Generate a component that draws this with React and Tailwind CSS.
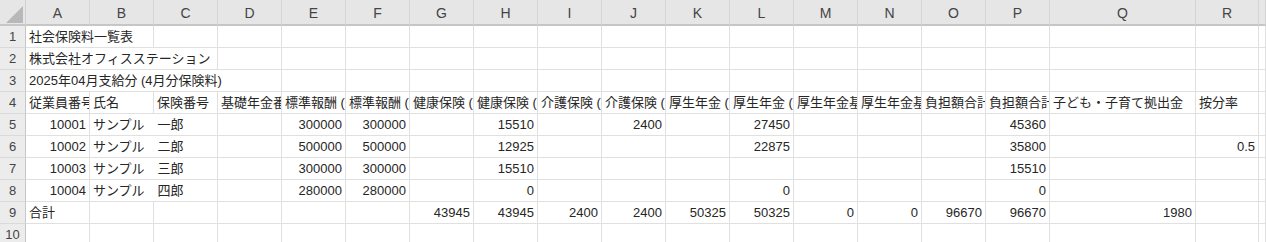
import React from "react";

const COLS = ["A","B","C","D","E","F","G","H","I","J","K","L","M","N","O","P","Q","R",""];

// each row: array of [colIndex(0=A), text, span, align]
const rows = [
  [[0, "社会保険料一覧表", 2, "l"]],
  [[0, "株式会社オフィスステーション", 3, "l"]],
  [[0, "2025年04月支給分 (4月分保険料)", 4, "l"]],
  [
    [0, "従業員番号", 1, "l"], [1, "氏名", 1, "l"], [2, "保険番号", 1, "l"], [3, "基礎年金番号", 1, "l"],
    [4, "標準報酬 (健保)", 1, "l"], [5, "標準報酬 (厚年)", 1, "l"], [6, "健康保険 (会社)", 1, "l"],
    [7, "健康保険 (個人)", 1, "l"], [8, "介護保険 (会社)", 1, "l"], [9, "介護保険 (個人)", 1, "l"],
    [10, "厚生年金 (会社)", 1, "l"], [11, "厚生年金 (個人)", 1, "l"], [12, "厚生年金基金 (会社)", 1, "l"],
    [13, "厚生年金基金 (個人)", 1, "l"], [14, "負担額合計 (会社)", 1, "l"], [15, "負担額合計 (個人)", 1, "l"],
    [16, "子ども・子育て拠出金", 1, "l"], [17, "按分率", 1, "l"],
  ],
  [[0, "10001", 1, "r"], [1, "サンプル　一郎", 2, "l"], [4, "300000", 1, "r"], [5, "300000", 1, "r"], [7, "15510", 1, "r"], [9, "2400", 1, "r"], [11, "27450", 1, "r"], [15, "45360", 1, "r"]],
  [[0, "10002", 1, "r"], [1, "サンプル　二郎", 2, "l"], [4, "500000", 1, "r"], [5, "500000", 1, "r"], [7, "12925", 1, "r"], [11, "22875", 1, "r"], [15, "35800", 1, "r"], [17, "0.5", 1, "r"]],
  [[0, "10003", 1, "r"], [1, "サンプル　三郎", 2, "l"], [4, "300000", 1, "r"], [5, "300000", 1, "r"], [7, "15510", 1, "r"], [15, "15510", 1, "r"]],
  [[0, "10004", 1, "r"], [1, "サンプル　四郎", 2, "l"], [4, "280000", 1, "r"], [5, "280000", 1, "r"], [7, "0", 1, "r"], [11, "0", 1, "r"], [15, "0", 1, "r"]],
  [[0, "合計", 1, "l"], [6, "43945", 1, "r"], [7, "43945", 1, "r"], [8, "2400", 1, "r"], [9, "2400", 1, "r"], [10, "50325", 1, "r"], [11, "50325", 1, "r"], [12, "0", 1, "r"], [13, "0", 1, "r"], [14, "96670", 1, "r"], [15, "96670", 1, "r"], [16, "1980", 1, "r"]],
  [],
];

const SPAN = { 1: "col-span-1", 2: "col-span-2", 3: "col-span-3", 4: "col-span-4" };

function buildRow(cells) {
  const out = [];
  const map = new Map(cells.map((c) => [c[0], c]));
  let i = 0;
  while (i < 19) {
    const c = map.get(i);
    if (c) {
      out.push({ text: c[1], span: c[2], align: c[3] });
      i += c[2];
    } else {
      out.push({ text: "", span: 1, align: "l" });
      i += 1;
    }
  }
  return out;
}

export default function App() {
  return (
    <div
      className="w-[1266px] h-[242px] overflow-hidden bg-white text-[#262626]"
      style={{ fontFamily: '"Liberation Sans", "Noto Sans CJK JP", sans-serif' }}
    >
      <div className="grid grid-cols-[26px_repeat(16,64px)_146px_63px_1fr] grid-rows-[26px_repeat(10,22px)]">
        {/* corner */}
        <div className="relative bg-[#e6e6e6] border-r border-b-2 border-r-[#d0d0d0] border-b-[#c6c6c6]">
          <svg className="absolute right-[2px] bottom-[1px]" width="17" height="17" viewBox="0 0 17 17">
            <polygon points="0,17 17,17 17,0" fill="#b8b8b8" />
          </svg>
        </div>
        {COLS.map((c, i) => (
          <div
            key={"h" + i}
            className="flex items-center justify-center bg-[#e6e6e6] border-b-2 border-b-[#c6c6c6] border-r border-r-[#d4d4d4] text-[14px] text-[#444] pt-[2px]"
          >
            {c}
          </div>
        ))}
        {rows.map((r, ri) => {
          const cells = buildRow(r);
          return (
            <React.Fragment key={"r" + ri}>
              <div className="flex items-center justify-center bg-[#ececec] border-r border-r-[#c6c6c6] border-b border-b-[#dadada] text-[13px] text-[#444]">
                {ri + 1}
              </div>
              {cells.map((cell, ci) => (
                <div
                  key={ci}
                  className={
                    SPAN[cell.span] +
                    " flex items-center overflow-hidden whitespace-nowrap border-r border-b border-[#e0e0e0] px-[3px] text-[13px] leading-none " +
                    (cell.align === "r" ? "justify-end" : "justify-start")
                  }
                >
                  {cell.text}
                </div>
              ))}
            </React.Fragment>
          );
        })}
      </div>
    </div>
  );
}
